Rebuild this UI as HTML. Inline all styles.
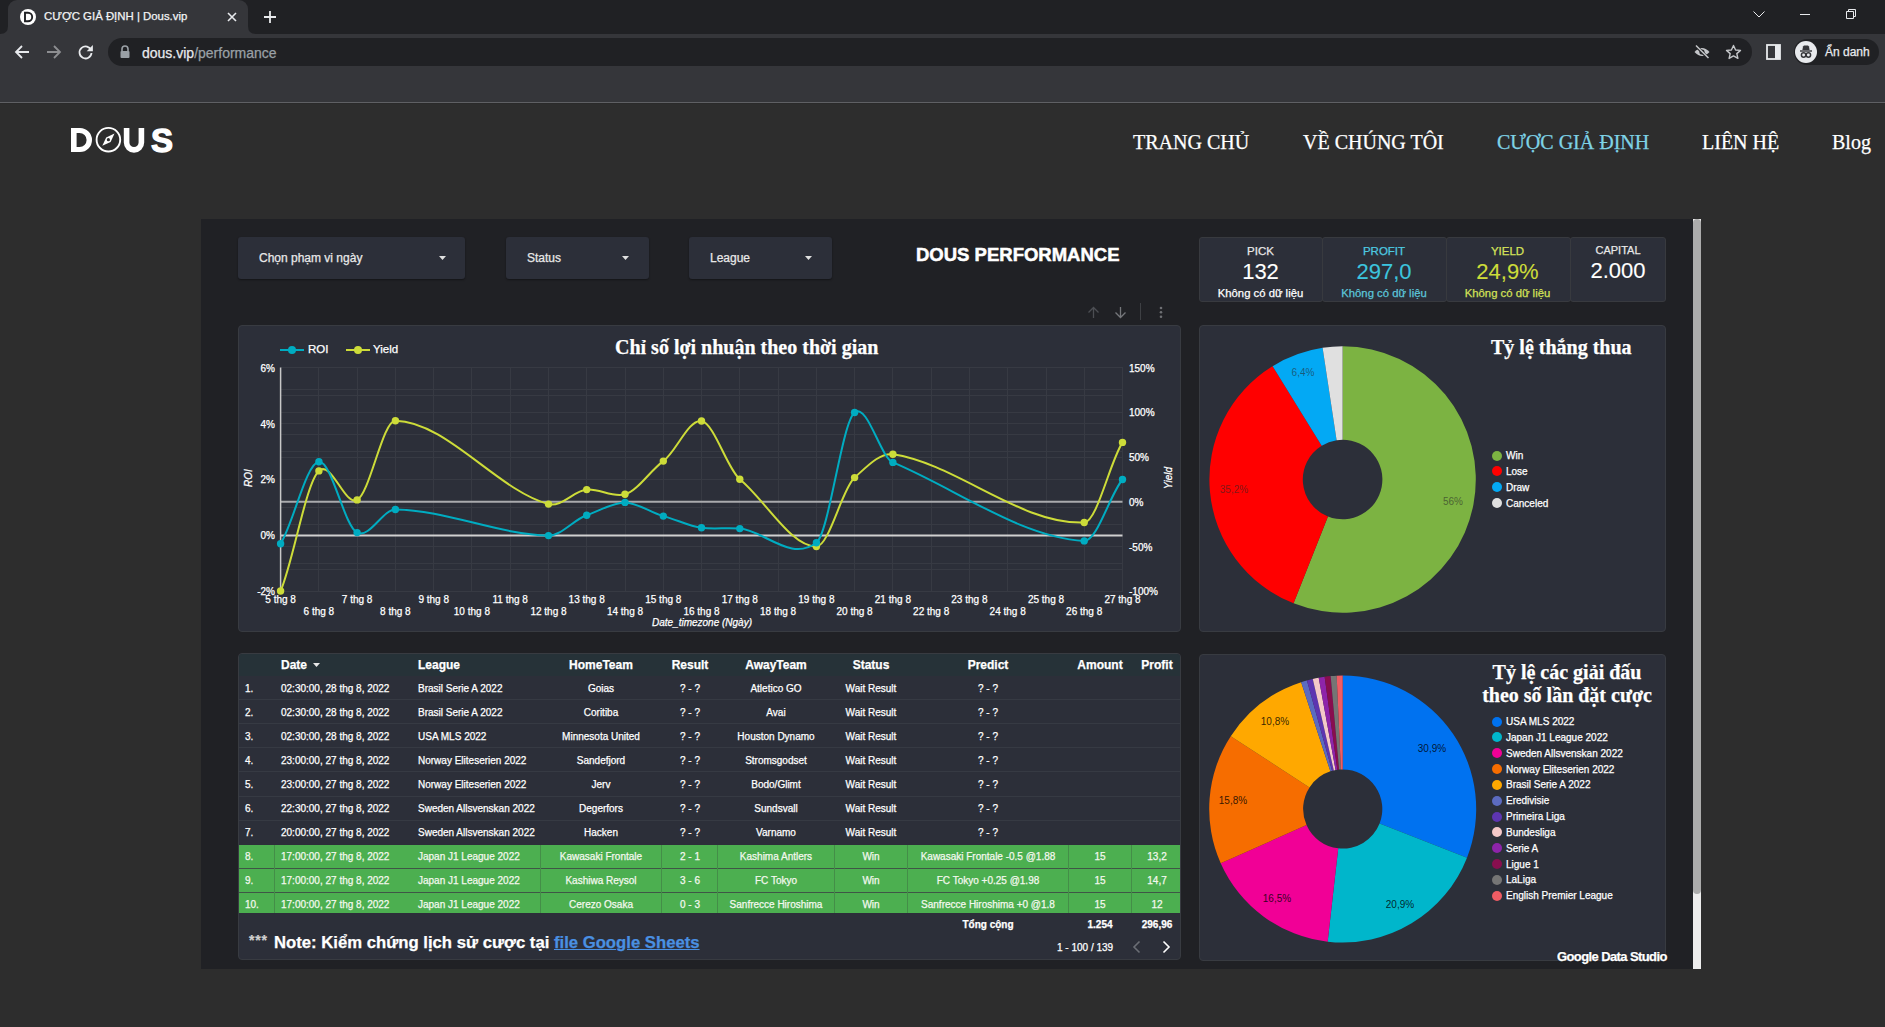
<!DOCTYPE html>
<html><head><meta charset="utf-8">
<style>
*{margin:0;padding:0;box-sizing:border-box}
html,body{width:1885px;height:1027px;overflow:hidden;background:#2d2d2d;font-family:"Liberation Sans",sans-serif;color:#fff}
.a{position:absolute}
.t{position:absolute;white-space:nowrap;line-height:1;-webkit-text-stroke:0.25px currentColor}
svg{position:absolute;overflow:visible}
.dd{position:absolute;background:#2c2f39;border-radius:3px;box-shadow:0 1px 2px rgba(0,0,0,.4)}
.card{position:absolute;background:#2c2f39;border:1px solid #383b41;border-radius:4px}
.kpi{position:absolute;background:#2c2f39;border:1px solid #383a3f;border-radius:3px}
.serif{font-family:"Liberation Serif",serif}
</style></head><body>
<!-- browser chrome -->
<div class="a" style="left:0;top:0;width:1885px;height:34px;background:#202124"></div>
<div class="a" style="left:8px;top:0;width:240px;height:34px;background:#35363a;border-radius:9px 9px 0 0"></div>
<svg style="left:0;top:24px" width="8" height="10"><path d="M0 10 Q8 10 8 2 L8 10 Z" fill="#35363a"/></svg>
<svg style="left:248px;top:24px" width="8" height="10"><path d="M0 2 Q0 10 8 10 L0 10 Z" fill="#35363a"/></svg>
<div class="a" style="left:0;top:34px;width:1885px;height:68px;background:#35363a"></div>
<div class="a" style="left:0;top:102px;width:1885px;height:1px;background:#5f6064"></div>
<div class="a" style="left:0;top:103px;width:1885px;height:1px;background:#2a2a2a"></div>
<!-- favicon -->
<div class="a" style="left:20px;top:9px;width:16px;height:16px;border-radius:50%;background:#fff"></div>
<svg style="left:20px;top:9px" width="16" height="16"><path d="M5 3.8 H8 A4.2 4.2 0 0 1 8 12.2 H5 Z" fill="none" stroke="#202124" stroke-width="1.9"/></svg>
<div class="t" style="left:44px;top:10px;font:11.4px 'Liberation Sans';color:#f1f3f4">CƯỢC GIẢ ĐỊNH | Dous.vip</div>
<svg style="left:226px;top:11px" width="12" height="12"><path d="M2 2 L10 10 M10 2 L2 10" stroke="#e8eaed" stroke-width="1.6"/></svg>
<svg style="left:263px;top:10px" width="14" height="14"><path d="M7 1 V13 M1 7 H13" stroke="#e8eaed" stroke-width="1.8"/></svg>
<!-- window controls -->
<svg style="left:1752px;top:9px" width="14" height="10"><path d="M1.5 2.5 L7 8 L12.5 2.5" stroke="#e8eaed" stroke-width="1" fill="none"/></svg>
<div class="a" style="left:1800px;top:14px;width:10px;height:1px;background:#e8eaed"></div>
<svg style="left:1845px;top:8px" width="12" height="12"><path d="M1.5 3.5 H8.5 V10.5 H1.5 Z M3.5 3.5 V1.5 H10.5 V8.5 H8.5" stroke="#e8eaed" stroke-width="1" fill="none"/></svg>
<!-- nav buttons -->
<svg style="left:14px;top:44px" width="16" height="16"><path d="M15 8 H2.5 M8 2 L2 8 L8 14" stroke="#e8eaed" stroke-width="1.8" fill="none"/></svg>
<svg style="left:46px;top:44px" width="16" height="16"><path d="M1 8 H13.5 M8 2 L14 8 L8 14" stroke="#8d8e91" stroke-width="1.8" fill="none"/></svg>
<svg style="left:78px;top:44px" width="16" height="16"><path d="M13.2 6.5 A6 6 0 1 0 13.5 9" stroke="#e8eaed" stroke-width="1.8" fill="none"/><path d="M14.9 1 L14.9 7.2 L8.7 7.2 Z" fill="#e8eaed"/></svg>
<!-- omnibox -->
<div class="a" style="left:108px;top:38px;width:1644px;height:28px;background:#202124;border-radius:14px"></div>
<svg style="left:119px;top:45px" width="12" height="14"><path d="M3 6 V4 A3 3 0 0 1 9 4 V6" stroke="#9aa0a6" stroke-width="1.6" fill="none"/><rect x="1.5" y="6" width="9" height="7" rx="1" fill="#9aa0a6"/></svg>
<div class="t" style="left:142px;top:45px;font:14px 'Liberation Sans';color:#e8eaed">dous.vip<span style="color:#9aa0a6">/performance</span></div>
<!-- eye slash -->
<svg style="left:1693px;top:44px" width="18" height="16"><path d="M1.5 8 Q9 0 16.5 8 Q9 16 1.5 8 Z" fill="#c4c6c9"/><circle cx="9" cy="8" r="2.6" fill="#202124"/><path d="M3 2 L15 14" stroke="#202124" stroke-width="3"/><path d="M3 1.5 L15.5 14" stroke="#c4c6c9" stroke-width="1.5"/></svg>
<!-- star -->
<svg style="left:1725px;top:44px" width="17" height="16"><path d="M8.5 1.5 L10.6 6 L15.5 6.4 L11.8 9.6 L12.9 14.4 L8.5 11.9 L4.1 14.4 L5.2 9.6 L1.5 6.4 L6.4 6 Z" stroke="#c4c6c9" stroke-width="1.4" fill="none" stroke-linejoin="round"/></svg>
<!-- side panel -->
<svg style="left:1766px;top:44px" width="16" height="16"><rect x="1" y="1" width="13" height="14" fill="none" stroke="#e8eaed" stroke-width="1.8"/><rect x="9" y="1" width="5" height="14" fill="#e8eaed"/></svg>
<!-- incognito pill -->
<div class="a" style="left:1794px;top:39px;width:85px;height:26px;background:#202124;border-radius:13px"></div>
<div class="a" style="left:1795px;top:41px;width:22px;height:22px;border-radius:50%;background:#e8eaed"></div>
<svg style="left:1795px;top:41px" width="22" height="22"><path d="M8 5.5 L9 4.5 H13 L14 5.5 L14.6 9 H7.4 Z" fill="#35363a"/><rect x="5" y="9.3" width="12" height="1.4" fill="#35363a"/><circle cx="8.6" cy="14" r="2.2" fill="none" stroke="#35363a" stroke-width="1.5"/><circle cx="13.4" cy="14" r="2.2" fill="none" stroke="#35363a" stroke-width="1.5"/><path d="M10.8 14 H11.2" stroke="#35363a" stroke-width="1.5"/></svg>
<div class="t" style="left:1825px;top:45px;font:12px 'Liberation Sans';color:#e8eaed">Ẩn danh</div>
<!-- site header -->
<svg style="left:70px;top:126px" width="105" height="30" viewBox="0 0 105 30">
 <path d="M1 2 H10 A12 12 0 0 1 10 26 H1 Z M6.6 7 V21 H9.6 A7 7 0 0 0 9.6 7 Z" fill="#fff" fill-rule="evenodd"/>
 <circle cx="38.4" cy="13.7" r="11.8" fill="none" stroke="#fff" stroke-width="1.9"/>
 <path d="M44.5 7.6 L40.6 15.9 L32.3 19.8 L36.2 11.5 Z" fill="#fff"/>
 <circle cx="38.4" cy="13.7" r="1.6" fill="#2d2d2d"/>
 <path d="M53.8 2 H59.4 V16.5 A4.6 4.6 0 0 0 68.6 16.5 V2 H74.2 V16.5 A10.2 10.2 0 0 1 53.8 16.5 Z" fill="#fff"/>
 <text x="81" y="25.8" font-family="Liberation Sans" font-weight="bold" font-size="33" fill="#fff" stroke="#fff" stroke-width="1.3">S</text>
</svg>
<div class="t serif" style="left:1133px;top:132px;font-size:20px;color:#fff">TRANG CHỦ</div>
<div class="t serif" style="left:1303px;top:132px;font-size:20px;color:#fff">VỀ CHÚNG TÔI</div>
<div class="t serif" style="left:1497px;top:132px;font-size:20px;color:#7fd3e6">CƯỢC GIẢ ĐỊNH</div>
<div class="t serif" style="left:1702px;top:132px;font-size:20px;color:#fff">LIÊN HỆ</div>
<div class="t serif" style="left:1832px;top:132px;font-size:20px;color:#fff">Blog</div>

<!-- dashboard panel -->
<div class="a" style="left:201px;top:219px;width:1492px;height:750px;background:#202125"></div>
<!-- scrollbar -->
<div class="a" style="left:1693px;top:219px;width:8px;height:750px;background:#ededed"></div>
<div class="a" style="left:1693px;top:219px;width:8px;height:675px;background:#acacac;border-radius:4px"></div>

<!-- dropdowns -->
<div class="dd" style="left:238px;top:237px;width:227px;height:42px"></div>
<div class="t" style="left:259px;top:252px;font-size:12px;color:#e8e8e8">Chọn phạm vi ngày</div>
<svg style="left:439px;top:256px" width="7" height="4"><path d="M0 0 H7 L3.5 4 Z" fill="#e0e0e0"/></svg>
<div class="dd" style="left:506px;top:237px;width:143px;height:42px"></div>
<div class="t" style="left:527px;top:252px;font-size:12px;color:#e8e8e8">Status</div>
<svg style="left:622px;top:256px" width="7" height="4"><path d="M0 0 H7 L3.5 4 Z" fill="#e0e0e0"/></svg>
<div class="dd" style="left:689px;top:237px;width:143px;height:42px"></div>
<div class="t" style="left:710px;top:252px;font-size:12px;color:#e8e8e8">League</div>
<svg style="left:805px;top:256px" width="7" height="4"><path d="M0 0 H7 L3.5 4 Z" fill="#e0e0e0"/></svg>

<div class="t" style="left:916px;top:246px;font-weight:bold;font-size:18.5px;color:#fff;-webkit-text-stroke:0.5px #fff">DOUS PERFORMANCE</div>

<!-- KPI cards -->
<div class="kpi" style="left:1199px;top:237px;width:124px;height:65px"></div>
<div class="kpi" style="left:1322px;top:237px;width:125px;height:65px"></div>
<div class="kpi" style="left:1446px;top:237px;width:125px;height:65px"></div>
<div class="kpi" style="left:1570px;top:237px;width:96px;height:65px"></div>
<div class="t" style="left:1199px;width:123px;text-align:center;top:246px;font-size:11.5px;color:#e8e8e8">PICK</div>
<div class="t" style="left:1199px;width:123px;text-align:center;top:261px;font-size:22px;-webkit-text-stroke:0.1px currentColor;color:#fff">132</div>
<div class="t" style="left:1199px;width:123px;text-align:center;top:288px;font-size:11.3px;color:#fff">Không có dữ liệu</div>
<div class="t" style="left:1323px;width:122px;text-align:center;top:246px;font-size:11.5px;color:#4dc9e0">PROFIT</div>
<div class="t" style="left:1323px;width:122px;text-align:center;top:261px;font-size:22px;-webkit-text-stroke:0.1px currentColor;color:#3cc4de">297,0</div>
<div class="t" style="left:1323px;width:122px;text-align:center;top:288px;font-size:11.3px;color:#5cc6da">Không có dữ liệu</div>
<div class="t" style="left:1446px;width:123px;text-align:center;top:246px;font-size:11.5px;color:#d6e35a">YIELD</div>
<div class="t" style="left:1446px;width:123px;text-align:center;top:261px;font-size:22px;-webkit-text-stroke:0.1px currentColor;color:#cddc39">24,9%</div>
<div class="t" style="left:1446px;width:123px;text-align:center;top:288px;font-size:11.3px;color:#d4e157">Không có dữ liệu</div>
<div class="t" style="left:1570px;width:96px;text-align:center;top:245px;font-size:11px;color:#e8e8e8">CAPITAL</div>
<div class="t" style="left:1570px;width:96px;text-align:center;top:260px;font-size:22px;-webkit-text-stroke:0.1px currentColor;color:#fff">2.000</div>

<!-- chart toolbar -->
<svg style="left:1087px;top:306px" width="90" height="16">
 <path d="M6.5 12 V1.5 M1.5 6.5 L6.5 1.5 L11.5 6.5" stroke="#4c4e53" stroke-width="1.3" fill="none"/>
 <path d="M33.5 1 V11.5 M28.5 6.5 L33.5 11.5 L38.5 6.5" stroke="#75777b" stroke-width="1.3" fill="none"/>
 <path d="M53.5 -3 V14" stroke="#3e4044" stroke-width="1"/>
 <circle cx="74" cy="2" r="1.3" fill="#6e7074"/><circle cx="74" cy="6.3" r="1.3" fill="#6e7074"/><circle cx="74" cy="10.7" r="1.3" fill="#6e7074"/>
</svg>
<!-- line chart card -->
<div class="card" style="left:238px;top:325px;width:943px;height:307px"></div>
<svg style="left:0;top:0" width="1885" height="1027">
<path d="M280.6 367.5 V591.4 M318.9 367.5 V591.4 M357.1 367.5 V591.4 M395.4 367.5 V591.4 M433.7 367.5 V591.4 M471.9 367.5 V591.4 M510.2 367.5 V591.4 M548.5 367.5 V591.4 M586.7 367.5 V591.4 M625.0 367.5 V591.4 M663.3 367.5 V591.4 M701.5 367.5 V591.4 M739.8 367.5 V591.4 M778.1 367.5 V591.4 M816.4 367.5 V591.4 M854.6 367.5 V591.4 M892.9 367.5 V591.4 M931.2 367.5 V591.4 M969.4 367.5 V591.4 M1007.7 367.5 V591.4 M1046.0 367.5 V591.4 M1084.2 367.5 V591.4 M1122.5 367.5 V591.4 M280.6 367.5 H1122.5 M280.6 395.5 H1122.5 M280.6 423.5 H1122.5 M280.6 451.5 H1122.5 M280.6 479.4 H1122.5 M280.6 507.4 H1122.5 M280.6 535.4 H1122.5 M280.6 563.4 H1122.5 M280.6 591.4 H1122.5 M280.6 367.5 H1122.5 M280.6 389.9 H1122.5 M280.6 412.3 H1122.5 M280.6 434.7 H1122.5 M280.6 457.1 H1122.5 M280.6 479.4 H1122.5 M280.6 501.8 H1122.5 M280.6 524.2 H1122.5 M280.6 546.6 H1122.5 M280.6 569.0 H1122.5 M280.6 591.4 H1122.5" stroke="#373a43" stroke-width="1" fill="none" shape-rendering="crispEdges"/>
<path d="M280.6 501.8 H1122.5" stroke="#a9aaad" stroke-width="2"/>
<path d="M280.6 535.4 H1122.5" stroke="#d0d0d0" stroke-width="2"/>
<path d="M280.6 367.5 V591.4" stroke="#c8c8c8" stroke-width="1.5"/>
<path d="M280.6 591.0 C293.4 561.0 306.1 482.3 318.9 470.9 C331.6 459.5 344.4 506.2 357.1 499.9 C369.9 493.6 382.6 420.5 395.4 420.7 C446.4 421.5 497.5 490.3 548.5 504.1 C561.2 507.5 574.0 490.8 586.7 489.6 C599.5 488.4 612.3 497.9 625.0 494.3 C637.8 490.7 650.5 470.3 663.3 461.1 C676.0 451.9 688.8 418.7 701.5 421.0 C714.3 423.3 727.1 468.7 739.8 479.2 C765.3 500.1 790.8 546.8 816.4 546.5 C829.1 546.4 841.9 489.1 854.6 477.6 C867.4 466.1 880.1 452.4 892.9 454.3 C956.7 463.7 1020.5 525.0 1084.2 522.5 C1097.0 522.0 1109.7 462.4 1122.5 442.4" stroke="#cddc39" stroke-width="2" fill="none"/>
<circle cx="280.6" cy="591.0" r="3.7" fill="#cddc39"/>
<circle cx="318.9" cy="470.9" r="3.7" fill="#cddc39"/>
<circle cx="357.1" cy="499.9" r="3.7" fill="#cddc39"/>
<circle cx="395.4" cy="420.7" r="3.7" fill="#cddc39"/>
<circle cx="548.5" cy="504.1" r="3.7" fill="#cddc39"/>
<circle cx="586.7" cy="489.6" r="3.7" fill="#cddc39"/>
<circle cx="625.0" cy="494.3" r="3.7" fill="#cddc39"/>
<circle cx="663.3" cy="461.1" r="3.7" fill="#cddc39"/>
<circle cx="701.5" cy="421.0" r="3.7" fill="#cddc39"/>
<circle cx="739.8" cy="479.2" r="3.7" fill="#cddc39"/>
<circle cx="816.4" cy="546.5" r="3.7" fill="#cddc39"/>
<circle cx="854.6" cy="477.6" r="3.7" fill="#cddc39"/>
<circle cx="892.9" cy="454.3" r="3.7" fill="#cddc39"/>
<circle cx="1084.2" cy="522.5" r="3.7" fill="#cddc39"/>
<circle cx="1122.5" cy="442.4" r="3.7" fill="#cddc39"/>
<path d="M280.6 543.8 C293.4 523.3 306.1 463.2 318.9 461.8 C331.6 460.4 344.4 526.6 357.1 532.6 C369.9 538.6 382.6 509.4 395.4 509.5 C446.4 510.1 497.5 534.4 548.5 535.6 C561.2 535.9 574.0 519.4 586.7 515.3 C599.5 511.1 612.3 502.3 625.0 502.4 C637.8 502.5 650.5 512.9 663.3 516.1 C676.0 519.3 688.8 526.2 701.5 527.8 C714.3 529.4 727.1 527.4 739.8 528.6 C765.3 531.1 790.8 562.1 816.4 542.7 C829.1 533.0 841.9 422.5 854.6 412.5 C867.4 402.5 880.1 457.0 892.9 462.4 C956.7 489.1 1020.5 537.3 1084.2 540.9 C1097.0 541.6 1109.7 494.9 1122.5 479.5" stroke="#00acc1" stroke-width="2" fill="none"/>
<circle cx="280.6" cy="543.8" r="3.7" fill="#00acc1"/>
<circle cx="318.9" cy="461.8" r="3.7" fill="#00acc1"/>
<circle cx="357.1" cy="532.6" r="3.7" fill="#00acc1"/>
<circle cx="395.4" cy="509.5" r="3.7" fill="#00acc1"/>
<circle cx="548.5" cy="535.6" r="3.7" fill="#00acc1"/>
<circle cx="586.7" cy="515.3" r="3.7" fill="#00acc1"/>
<circle cx="625.0" cy="502.4" r="3.7" fill="#00acc1"/>
<circle cx="663.3" cy="516.1" r="3.7" fill="#00acc1"/>
<circle cx="701.5" cy="527.8" r="3.7" fill="#00acc1"/>
<circle cx="739.8" cy="528.6" r="3.7" fill="#00acc1"/>
<circle cx="816.4" cy="542.7" r="3.7" fill="#00acc1"/>
<circle cx="854.6" cy="412.5" r="3.7" fill="#00acc1"/>
<circle cx="892.9" cy="462.4" r="3.7" fill="#00acc1"/>
<circle cx="1084.2" cy="540.9" r="3.7" fill="#00acc1"/>
<circle cx="1122.5" cy="479.5" r="3.7" fill="#00acc1"/>
</svg>
<svg style="left:0;top:0" width="1885" height="1027">
<path d="M280 350 H304" stroke="#00acc1" stroke-width="2"/><circle cx="292" cy="350" r="4" fill="#00acc1"/>
<path d="M346 350 H370" stroke="#cddc39" stroke-width="2"/><circle cx="358" cy="350" r="4" fill="#cddc39"/>
</svg>
<div class="t" style="left:308px;top:344px;font-size:11.5px;color:#fff">ROI</div>
<div class="t" style="left:373px;top:344px;font-size:11.5px;color:#fff">Yield</div>
<div class="t serif" style="left:615px;top:337px;font-size:20px;font-weight:bold;color:#fff">Chỉ số lợi nhuận theo thời gian</div>
<div class="t" style="left:175px;width:100px;text-align:right;top:363.5px;font-size:10px;color:#fff">6%</div>
<div class="t" style="left:175px;width:100px;text-align:right;top:419.5px;font-size:10px;color:#fff">4%</div>
<div class="t" style="left:175px;width:100px;text-align:right;top:475.4px;font-size:10px;color:#fff">2%</div>
<div class="t" style="left:175px;width:100px;text-align:right;top:531.4px;font-size:10px;color:#fff">0%</div>
<div class="t" style="left:175px;width:100px;text-align:right;top:587.4px;font-size:10px;color:#fff">-2%</div>
<div class="t" style="left:1129px;top:363.5px;font-size:10px;color:#fff">150%</div>
<div class="t" style="left:1129px;top:408.3px;font-size:10px;color:#fff">100%</div>
<div class="t" style="left:1129px;top:453.1px;font-size:10px;color:#fff">50%</div>
<div class="t" style="left:1129px;top:497.8px;font-size:10px;color:#fff">0%</div>
<div class="t" style="left:1129px;top:542.6px;font-size:10px;color:#fff">-50%</div>
<div class="t" style="left:1129px;top:587.4px;font-size:10px;color:#fff">-100%</div>
<div class="t" style="left:240.6px;width:80px;text-align:center;top:595px;font-size:10px;color:#fff">5 thg 8</div>
<div class="t" style="left:278.9px;width:80px;text-align:center;top:607px;font-size:10px;color:#fff">6 thg 8</div>
<div class="t" style="left:317.1px;width:80px;text-align:center;top:595px;font-size:10px;color:#fff">7 thg 8</div>
<div class="t" style="left:355.4px;width:80px;text-align:center;top:607px;font-size:10px;color:#fff">8 thg 8</div>
<div class="t" style="left:393.7px;width:80px;text-align:center;top:595px;font-size:10px;color:#fff">9 thg 8</div>
<div class="t" style="left:431.9px;width:80px;text-align:center;top:607px;font-size:10px;color:#fff">10 thg 8</div>
<div class="t" style="left:470.2px;width:80px;text-align:center;top:595px;font-size:10px;color:#fff">11 thg 8</div>
<div class="t" style="left:508.5px;width:80px;text-align:center;top:607px;font-size:10px;color:#fff">12 thg 8</div>
<div class="t" style="left:546.7px;width:80px;text-align:center;top:595px;font-size:10px;color:#fff">13 thg 8</div>
<div class="t" style="left:585.0px;width:80px;text-align:center;top:607px;font-size:10px;color:#fff">14 thg 8</div>
<div class="t" style="left:623.3px;width:80px;text-align:center;top:595px;font-size:10px;color:#fff">15 thg 8</div>
<div class="t" style="left:661.5px;width:80px;text-align:center;top:607px;font-size:10px;color:#fff">16 thg 8</div>
<div class="t" style="left:699.8px;width:80px;text-align:center;top:595px;font-size:10px;color:#fff">17 thg 8</div>
<div class="t" style="left:738.1px;width:80px;text-align:center;top:607px;font-size:10px;color:#fff">18 thg 8</div>
<div class="t" style="left:776.4px;width:80px;text-align:center;top:595px;font-size:10px;color:#fff">19 thg 8</div>
<div class="t" style="left:814.6px;width:80px;text-align:center;top:607px;font-size:10px;color:#fff">20 thg 8</div>
<div class="t" style="left:852.9px;width:80px;text-align:center;top:595px;font-size:10px;color:#fff">21 thg 8</div>
<div class="t" style="left:891.2px;width:80px;text-align:center;top:607px;font-size:10px;color:#fff">22 thg 8</div>
<div class="t" style="left:929.4px;width:80px;text-align:center;top:595px;font-size:10px;color:#fff">23 thg 8</div>
<div class="t" style="left:967.7px;width:80px;text-align:center;top:607px;font-size:10px;color:#fff">24 thg 8</div>
<div class="t" style="left:1006.0px;width:80px;text-align:center;top:595px;font-size:10px;color:#fff">25 thg 8</div>
<div class="t" style="left:1044.2px;width:80px;text-align:center;top:607px;font-size:10px;color:#fff">26 thg 8</div>
<div class="t" style="left:1082.5px;width:80px;text-align:center;top:595px;font-size:10px;color:#fff">27 thg 8</div>
<div class="t" style="left:602px;width:200px;text-align:center;top:618px;font-size:10px;font-style:italic;color:#fff">Date_timezone (Ngày)</div>
<div class="t" style="left:229px;width:40px;text-align:center;top:473px;font-size:10px;font-style:italic;color:#fff;transform:rotate(-90deg)">ROI</div>
<div class="t" style="left:1149px;width:40px;text-align:center;top:473px;font-size:10px;font-style:italic;color:#fff;transform:rotate(-90deg)">Yield</div>
<!-- pie 1 -->
<div class="card" style="left:1199px;top:325px;width:467px;height:307px"></div>
<svg style="left:0;top:0" width="1885" height="1027">
<path d="M1342.60 346.30 A133.2 133.2 0 1 1 1293.57 603.35 L1327.95 516.51 A39.8 39.8 0 1 0 1342.60 439.70 Z" fill="#7cb342"/>
<path d="M1293.57 603.35 A133.2 133.2 0 0 1 1272.65 366.15 L1321.70 445.63 A39.8 39.8 0 0 0 1327.95 516.51 Z" fill="#ff0000"/>
<path d="M1272.65 366.15 A133.2 133.2 0 0 1 1322.59 347.81 L1336.62 440.15 A39.8 39.8 0 0 0 1321.70 445.63 Z" fill="#03a9f4"/>
<path d="M1322.59 347.81 A133.2 133.2 0 0 1 1342.60 346.30 L1342.60 439.70 A39.8 39.8 0 0 0 1336.62 440.15 Z" fill="#e0e0e0"/>
</svg>
<div class="t serif" style="left:1491px;top:337px;font-size:20px;font-weight:bold;color:#fff">Tỷ lệ thắng thua</div>
<div class="a" style="left:1492px;top:450.5px;width:10px;height:10px;border-radius:50%;background:#7cb342"></div>
<div class="t" style="left:1506px;top:451.0px;font-size:10px;color:#fff">Win</div>
<div class="a" style="left:1492px;top:466.4px;width:10px;height:10px;border-radius:50%;background:#ff0000"></div>
<div class="t" style="left:1506px;top:466.9px;font-size:10px;color:#fff">Lose</div>
<div class="a" style="left:1492px;top:482.3px;width:10px;height:10px;border-radius:50%;background:#03a9f4"></div>
<div class="t" style="left:1506px;top:482.8px;font-size:10px;color:#fff">Draw</div>
<div class="a" style="left:1492px;top:498.2px;width:10px;height:10px;border-radius:50%;background:#e0e0e0"></div>
<div class="t" style="left:1506px;top:498.7px;font-size:10px;color:#fff">Canceled</div>
<div class="t" style="left:1423px;width:60px;text-align:center;top:497px;font-size:10px;color:rgba(40,40,40,.6);-webkit-text-stroke:0">56%</div>
<div class="t" style="left:1204px;width:60px;text-align:center;top:485px;font-size:10px;color:rgba(40,40,40,.6);-webkit-text-stroke:0">35,2%</div>
<div class="t" style="left:1273px;width:60px;text-align:center;top:368px;font-size:10px;color:rgba(40,40,40,.6);-webkit-text-stroke:0">6,4%</div>
<!-- pie 2 -->
<div class="card" style="left:1199px;top:654px;width:467px;height:307px"></div>
<svg style="left:0;top:0" width="1885" height="1027">
<path d="M1342.70 675.50 A133.5 133.5 0 0 1 1467.02 857.64 L1379.58 823.43 A39.6 39.6 0 0 0 1342.70 769.40 Z" fill="#0072f0"/>
<path d="M1467.02 857.64 A133.5 133.5 0 0 1 1327.65 941.65 L1338.23 848.35 A39.6 39.6 0 0 0 1379.58 823.43 Z" fill="#00b6cb"/>
<path d="M1327.65 941.65 A133.5 133.5 0 0 1 1220.70 863.21 L1306.51 825.08 A39.6 39.6 0 0 0 1338.23 848.35 Z" fill="#f10096"/>
<path d="M1220.70 863.21 A133.5 133.5 0 0 1 1230.76 736.25 L1309.50 787.42 A39.6 39.6 0 0 0 1306.51 825.08 Z" fill="#f66d00"/>
<path d="M1230.76 736.25 A133.5 133.5 0 0 1 1301.16 682.13 L1330.38 771.37 A39.6 39.6 0 0 0 1309.50 787.42 Z" fill="#ffa800"/>
<path d="M1301.16 682.13 A133.5 133.5 0 0 1 1306.93 680.38 L1332.09 770.85 A39.6 39.6 0 0 0 1330.38 771.37 Z" fill="#5c6bc0"/>
<path d="M1306.93 680.38 A133.5 133.5 0 0 1 1312.78 678.90 L1333.83 770.41 A39.6 39.6 0 0 0 1332.09 770.85 Z" fill="#5e35b1"/>
<path d="M1312.78 678.90 A133.5 133.5 0 0 1 1318.69 677.68 L1335.58 770.05 A39.6 39.6 0 0 0 1333.83 770.41 Z" fill="#f5c9c9"/>
<path d="M1318.69 677.68 A133.5 133.5 0 0 1 1324.65 676.73 L1337.35 769.76 A39.6 39.6 0 0 0 1335.58 770.05 Z" fill="#8e24aa"/>
<path d="M1324.65 676.73 A133.5 133.5 0 0 1 1330.65 676.05 L1339.12 769.56 A39.6 39.6 0 0 0 1337.35 769.76 Z" fill="#880e4f"/>
<path d="M1330.65 676.05 A133.5 133.5 0 0 1 1336.67 675.64 L1340.91 769.44 A39.6 39.6 0 0 0 1339.12 769.56 Z" fill="#757575"/>
<path d="M1336.67 675.64 A133.5 133.5 0 0 1 1342.70 675.50 L1342.70 769.40 A39.6 39.6 0 0 0 1340.91 769.44 Z" fill="#ef5c64"/>
</svg>
<div class="t serif" style="left:1467px;width:200px;text-align:center;top:662px;font-size:20px;font-weight:bold;color:#fff">Tỷ lệ các giải đấu</div>
<div class="t serif" style="left:1467px;width:200px;text-align:center;top:685px;font-size:20px;font-weight:bold;color:#fff">theo số lần đặt cược</div>
<div class="a" style="left:1492px;top:716.5px;width:10px;height:10px;border-radius:50%;background:#0072f0"></div>
<div class="t" style="left:1506px;top:717.0px;font-size:10px;color:#fff">USA MLS 2022</div>
<div class="a" style="left:1492px;top:732.3px;width:10px;height:10px;border-radius:50%;background:#00b6cb"></div>
<div class="t" style="left:1506px;top:732.8px;font-size:10px;color:#fff">Japan J1 League 2022</div>
<div class="a" style="left:1492px;top:748.2px;width:10px;height:10px;border-radius:50%;background:#f10096"></div>
<div class="t" style="left:1506px;top:748.7px;font-size:10px;color:#fff">Sweden Allsvenskan 2022</div>
<div class="a" style="left:1492px;top:764.0px;width:10px;height:10px;border-radius:50%;background:#f66d00"></div>
<div class="t" style="left:1506px;top:764.5px;font-size:10px;color:#fff">Norway Eliteserien 2022</div>
<div class="a" style="left:1492px;top:779.9px;width:10px;height:10px;border-radius:50%;background:#ffa800"></div>
<div class="t" style="left:1506px;top:780.4px;font-size:10px;color:#fff">Brasil Serie A 2022</div>
<div class="a" style="left:1492px;top:795.7px;width:10px;height:10px;border-radius:50%;background:#5c6bc0"></div>
<div class="t" style="left:1506px;top:796.2px;font-size:10px;color:#fff">Eredivisie</div>
<div class="a" style="left:1492px;top:811.5px;width:10px;height:10px;border-radius:50%;background:#5e35b1"></div>
<div class="t" style="left:1506px;top:812.0px;font-size:10px;color:#fff">Primeira Liga</div>
<div class="a" style="left:1492px;top:827.4px;width:10px;height:10px;border-radius:50%;background:#f5c9c9"></div>
<div class="t" style="left:1506px;top:827.9px;font-size:10px;color:#fff">Bundesliga</div>
<div class="a" style="left:1492px;top:843.2px;width:10px;height:10px;border-radius:50%;background:#8e24aa"></div>
<div class="t" style="left:1506px;top:843.7px;font-size:10px;color:#fff">Serie A</div>
<div class="a" style="left:1492px;top:859.1px;width:10px;height:10px;border-radius:50%;background:#880e4f"></div>
<div class="t" style="left:1506px;top:859.6px;font-size:10px;color:#fff">Ligue 1</div>
<div class="a" style="left:1492px;top:874.9px;width:10px;height:10px;border-radius:50%;background:#757575"></div>
<div class="t" style="left:1506px;top:875.4px;font-size:10px;color:#fff">LaLiga</div>
<div class="a" style="left:1492px;top:890.7px;width:10px;height:10px;border-radius:50%;background:#ef5c64"></div>
<div class="t" style="left:1506px;top:891.2px;font-size:10px;color:#fff">English Premier League</div>
<div class="t" style="left:1402px;width:60px;text-align:center;top:744px;font-size:10px;color:rgba(0,0,0,.8);-webkit-text-stroke:0">30,9%</div>
<div class="t" style="left:1370px;width:60px;text-align:center;top:900px;font-size:10px;color:rgba(0,0,0,.8);-webkit-text-stroke:0">20,9%</div>
<div class="t" style="left:1247px;width:60px;text-align:center;top:894px;font-size:10px;color:rgba(0,0,0,.8);-webkit-text-stroke:0">16,5%</div>
<div class="t" style="left:1203px;width:60px;text-align:center;top:796px;font-size:10px;color:rgba(0,0,0,.8);-webkit-text-stroke:0">15,8%</div>
<div class="t" style="left:1245px;width:60px;text-align:center;top:717px;font-size:10px;color:rgba(0,0,0,.8);-webkit-text-stroke:0">10,8%</div>
<div class="t" style="left:1557px;top:950px;font-size:13px;font-weight:bold;color:#fff;letter-spacing:-0.6px;text-shadow:0 0 2px rgba(0,0,0,.6)">Google Data Studio</div>
<!-- table card -->
<div class="card" style="left:238px;top:653px;width:943px;height:307px"></div>
<div class="a" style="left:239px;top:654px;width:941px;height:22px;background:#263238;border-radius:3px 3px 0 0"></div>
<div class="t" style="left:281px;top:659px;font-size:12px;font-weight:bold;color:#fff">Date</div>
<div class="t" style="left:418px;top:659px;font-size:12px;font-weight:bold;color:#fff">League</div>
<div class="t" style="left:541px;width:120px;text-align:center;top:659px;font-size:12px;font-weight:bold;color:#fff">HomeTeam</div>
<div class="t" style="left:630px;width:120px;text-align:center;top:659px;font-size:12px;font-weight:bold;color:#fff">Result</div>
<div class="t" style="left:716px;width:120px;text-align:center;top:659px;font-size:12px;font-weight:bold;color:#fff">AwayTeam</div>
<div class="t" style="left:811px;width:120px;text-align:center;top:659px;font-size:12px;font-weight:bold;color:#fff">Status</div>
<div class="t" style="left:928px;width:120px;text-align:center;top:659px;font-size:12px;font-weight:bold;color:#fff">Predict</div>
<div class="t" style="left:1040px;width:120px;text-align:center;top:659px;font-size:12px;font-weight:bold;color:#fff">Amount</div>
<div class="t" style="left:1097px;width:120px;text-align:center;top:659px;font-size:12px;font-weight:bold;color:#fff">Profit</div>
<svg style="left:313px;top:663px" width="7" height="4"><path d="M0 0 H7 L3.5 4 Z" fill="#e8e8e8"/></svg>
<div class="a" style="left:239px;top:844.7px;width:941px;height:68.4px;background:#4caf50"></div>
<div class="a" style="left:239px;top:699.1px;width:941px;height:1px;background:#363a43"></div>
<div class="a" style="left:239px;top:723.2px;width:941px;height:1px;background:#363a43"></div>
<div class="a" style="left:239px;top:747.3px;width:941px;height:1px;background:#363a43"></div>
<div class="a" style="left:239px;top:771.4px;width:941px;height:1px;background:#363a43"></div>
<div class="a" style="left:239px;top:795.5px;width:941px;height:1px;background:#363a43"></div>
<div class="a" style="left:239px;top:819.6px;width:941px;height:1px;background:#363a43"></div>
<div class="a" style="left:239px;top:867.6px;width:941px;height:1.5px;background:#3f5646"></div>
<div class="a" style="left:239px;top:891.7px;width:941px;height:1.5px;background:#3f5646"></div>
<div class="a" style="left:274.0px;top:844.7px;width:1px;height:68.4px;background:#448e48"></div>
<div class="a" style="left:539.9px;top:844.7px;width:1px;height:68.4px;background:#448e48"></div>
<div class="a" style="left:660.8px;top:844.7px;width:1px;height:68.4px;background:#448e48"></div>
<div class="a" style="left:716.9px;top:844.7px;width:1px;height:68.4px;background:#448e48"></div>
<div class="a" style="left:834.0px;top:844.7px;width:1px;height:68.4px;background:#448e48"></div>
<div class="a" style="left:906.7px;top:844.7px;width:1px;height:68.4px;background:#448e48"></div>
<div class="a" style="left:1067.8px;top:844.7px;width:1px;height:68.4px;background:#448e48"></div>
<div class="a" style="left:1130.7px;top:844.7px;width:1px;height:68.4px;background:#448e48"></div>
<div class="t" style="left:245px;top:683.5px;font-size:10px;color:#fff">1.</div>
<div class="t" style="left:281px;top:683.5px;font-size:10px;color:#fff">02:30:00, 28 thg 8, 2022</div>
<div class="t" style="left:418px;top:683.5px;font-size:10px;color:#fff">Brasil Serie A 2022</div>
<div class="t" style="left:521px;width:160px;text-align:center;top:683.5px;font-size:10px;color:#fff">Goias</div>
<div class="t" style="left:610px;width:160px;text-align:center;top:683.5px;font-size:10px;color:#fff">? - ?</div>
<div class="t" style="left:696px;width:160px;text-align:center;top:683.5px;font-size:10px;color:#fff">Atletico GO</div>
<div class="t" style="left:791px;width:160px;text-align:center;top:683.5px;font-size:10px;color:#fff">Wait Result</div>
<div class="t" style="left:908px;width:160px;text-align:center;top:683.5px;font-size:10px;color:#fff">? - ?</div>
<div class="t" style="left:245px;top:707.6px;font-size:10px;color:#fff">2.</div>
<div class="t" style="left:281px;top:707.6px;font-size:10px;color:#fff">02:30:00, 28 thg 8, 2022</div>
<div class="t" style="left:418px;top:707.6px;font-size:10px;color:#fff">Brasil Serie A 2022</div>
<div class="t" style="left:521px;width:160px;text-align:center;top:707.6px;font-size:10px;color:#fff">Coritiba</div>
<div class="t" style="left:610px;width:160px;text-align:center;top:707.6px;font-size:10px;color:#fff">? - ?</div>
<div class="t" style="left:696px;width:160px;text-align:center;top:707.6px;font-size:10px;color:#fff">Avai</div>
<div class="t" style="left:791px;width:160px;text-align:center;top:707.6px;font-size:10px;color:#fff">Wait Result</div>
<div class="t" style="left:908px;width:160px;text-align:center;top:707.6px;font-size:10px;color:#fff">? - ?</div>
<div class="t" style="left:245px;top:731.8px;font-size:10px;color:#fff">3.</div>
<div class="t" style="left:281px;top:731.8px;font-size:10px;color:#fff">02:30:00, 28 thg 8, 2022</div>
<div class="t" style="left:418px;top:731.8px;font-size:10px;color:#fff">USA MLS 2022</div>
<div class="t" style="left:521px;width:160px;text-align:center;top:731.8px;font-size:10px;color:#fff">Minnesota United</div>
<div class="t" style="left:610px;width:160px;text-align:center;top:731.8px;font-size:10px;color:#fff">? - ?</div>
<div class="t" style="left:696px;width:160px;text-align:center;top:731.8px;font-size:10px;color:#fff">Houston Dynamo</div>
<div class="t" style="left:791px;width:160px;text-align:center;top:731.8px;font-size:10px;color:#fff">Wait Result</div>
<div class="t" style="left:908px;width:160px;text-align:center;top:731.8px;font-size:10px;color:#fff">? - ?</div>
<div class="t" style="left:245px;top:755.9px;font-size:10px;color:#fff">4.</div>
<div class="t" style="left:281px;top:755.9px;font-size:10px;color:#fff">23:00:00, 27 thg 8, 2022</div>
<div class="t" style="left:418px;top:755.9px;font-size:10px;color:#fff">Norway Eliteserien 2022</div>
<div class="t" style="left:521px;width:160px;text-align:center;top:755.9px;font-size:10px;color:#fff">Sandefjord</div>
<div class="t" style="left:610px;width:160px;text-align:center;top:755.9px;font-size:10px;color:#fff">? - ?</div>
<div class="t" style="left:696px;width:160px;text-align:center;top:755.9px;font-size:10px;color:#fff">Stromsgodset</div>
<div class="t" style="left:791px;width:160px;text-align:center;top:755.9px;font-size:10px;color:#fff">Wait Result</div>
<div class="t" style="left:908px;width:160px;text-align:center;top:755.9px;font-size:10px;color:#fff">? - ?</div>
<div class="t" style="left:245px;top:780.0px;font-size:10px;color:#fff">5.</div>
<div class="t" style="left:281px;top:780.0px;font-size:10px;color:#fff">23:00:00, 27 thg 8, 2022</div>
<div class="t" style="left:418px;top:780.0px;font-size:10px;color:#fff">Norway Eliteserien 2022</div>
<div class="t" style="left:521px;width:160px;text-align:center;top:780.0px;font-size:10px;color:#fff">Jerv</div>
<div class="t" style="left:610px;width:160px;text-align:center;top:780.0px;font-size:10px;color:#fff">? - ?</div>
<div class="t" style="left:696px;width:160px;text-align:center;top:780.0px;font-size:10px;color:#fff">Bodo/Glimt</div>
<div class="t" style="left:791px;width:160px;text-align:center;top:780.0px;font-size:10px;color:#fff">Wait Result</div>
<div class="t" style="left:908px;width:160px;text-align:center;top:780.0px;font-size:10px;color:#fff">? - ?</div>
<div class="t" style="left:245px;top:804.0px;font-size:10px;color:#fff">6.</div>
<div class="t" style="left:281px;top:804.0px;font-size:10px;color:#fff">22:30:00, 27 thg 8, 2022</div>
<div class="t" style="left:418px;top:804.0px;font-size:10px;color:#fff">Sweden Allsvenskan 2022</div>
<div class="t" style="left:521px;width:160px;text-align:center;top:804.0px;font-size:10px;color:#fff">Degerfors</div>
<div class="t" style="left:610px;width:160px;text-align:center;top:804.0px;font-size:10px;color:#fff">? - ?</div>
<div class="t" style="left:696px;width:160px;text-align:center;top:804.0px;font-size:10px;color:#fff">Sundsvall</div>
<div class="t" style="left:791px;width:160px;text-align:center;top:804.0px;font-size:10px;color:#fff">Wait Result</div>
<div class="t" style="left:908px;width:160px;text-align:center;top:804.0px;font-size:10px;color:#fff">? - ?</div>
<div class="t" style="left:245px;top:828.1px;font-size:10px;color:#fff">7.</div>
<div class="t" style="left:281px;top:828.1px;font-size:10px;color:#fff">20:00:00, 27 thg 8, 2022</div>
<div class="t" style="left:418px;top:828.1px;font-size:10px;color:#fff">Sweden Allsvenskan 2022</div>
<div class="t" style="left:521px;width:160px;text-align:center;top:828.1px;font-size:10px;color:#fff">Hacken</div>
<div class="t" style="left:610px;width:160px;text-align:center;top:828.1px;font-size:10px;color:#fff">? - ?</div>
<div class="t" style="left:696px;width:160px;text-align:center;top:828.1px;font-size:10px;color:#fff">Varnamo</div>
<div class="t" style="left:791px;width:160px;text-align:center;top:828.1px;font-size:10px;color:#fff">Wait Result</div>
<div class="t" style="left:908px;width:160px;text-align:center;top:828.1px;font-size:10px;color:#fff">? - ?</div>
<div class="t" style="left:245px;top:852.2px;font-size:10px;color:#f3f8ee">8.</div>
<div class="t" style="left:281px;top:852.2px;font-size:10px;color:#f3f8ee">17:00:00, 27 thg 8, 2022</div>
<div class="t" style="left:418px;top:852.2px;font-size:10px;color:#f3f8ee">Japan J1 League 2022</div>
<div class="t" style="left:521px;width:160px;text-align:center;top:852.2px;font-size:10px;color:#f3f8ee">Kawasaki Frontale</div>
<div class="t" style="left:610px;width:160px;text-align:center;top:852.2px;font-size:10px;color:#f3f8ee">2 - 1</div>
<div class="t" style="left:696px;width:160px;text-align:center;top:852.2px;font-size:10px;color:#f3f8ee">Kashima Antlers</div>
<div class="t" style="left:791px;width:160px;text-align:center;top:852.2px;font-size:10px;color:#f3f8ee">Win</div>
<div class="t" style="left:908px;width:160px;text-align:center;top:852.2px;font-size:10px;color:#f3f8ee">Kawasaki Frontale -0.5 @1.88</div>
<div class="t" style="left:1020px;width:160px;text-align:center;top:852.2px;font-size:10px;color:#f3f8ee">15</div>
<div class="t" style="left:1077px;width:160px;text-align:center;top:852.2px;font-size:10px;color:#f3f8ee">13,2</div>
<div class="t" style="left:245px;top:876.4px;font-size:10px;color:#f3f8ee">9.</div>
<div class="t" style="left:281px;top:876.4px;font-size:10px;color:#f3f8ee">17:00:00, 27 thg 8, 2022</div>
<div class="t" style="left:418px;top:876.4px;font-size:10px;color:#f3f8ee">Japan J1 League 2022</div>
<div class="t" style="left:521px;width:160px;text-align:center;top:876.4px;font-size:10px;color:#f3f8ee">Kashiwa Reysol</div>
<div class="t" style="left:610px;width:160px;text-align:center;top:876.4px;font-size:10px;color:#f3f8ee">3 - 6</div>
<div class="t" style="left:696px;width:160px;text-align:center;top:876.4px;font-size:10px;color:#f3f8ee">FC Tokyo</div>
<div class="t" style="left:791px;width:160px;text-align:center;top:876.4px;font-size:10px;color:#f3f8ee">Win</div>
<div class="t" style="left:908px;width:160px;text-align:center;top:876.4px;font-size:10px;color:#f3f8ee">FC Tokyo +0.25 @1.98</div>
<div class="t" style="left:1020px;width:160px;text-align:center;top:876.4px;font-size:10px;color:#f3f8ee">15</div>
<div class="t" style="left:1077px;width:160px;text-align:center;top:876.4px;font-size:10px;color:#f3f8ee">14,7</div>
<div class="t" style="left:245px;top:900.0px;font-size:10px;color:#f3f8ee">10.</div>
<div class="t" style="left:281px;top:900.0px;font-size:10px;color:#f3f8ee">17:00:00, 27 thg 8, 2022</div>
<div class="t" style="left:418px;top:900.0px;font-size:10px;color:#f3f8ee">Japan J1 League 2022</div>
<div class="t" style="left:521px;width:160px;text-align:center;top:900.0px;font-size:10px;color:#f3f8ee">Cerezo Osaka</div>
<div class="t" style="left:610px;width:160px;text-align:center;top:900.0px;font-size:10px;color:#f3f8ee">0 - 3</div>
<div class="t" style="left:696px;width:160px;text-align:center;top:900.0px;font-size:10px;color:#f3f8ee">Sanfrecce Hiroshima</div>
<div class="t" style="left:791px;width:160px;text-align:center;top:900.0px;font-size:10px;color:#f3f8ee">Win</div>
<div class="t" style="left:908px;width:160px;text-align:center;top:900.0px;font-size:10px;color:#f3f8ee">Sanfrecce Hiroshima +0 @1.8</div>
<div class="t" style="left:1020px;width:160px;text-align:center;top:900.0px;font-size:10px;color:#f3f8ee">15</div>
<div class="t" style="left:1077px;width:160px;text-align:center;top:900.0px;font-size:10px;color:#f3f8ee">12</div>
<div class="t" style="left:908px;width:160px;text-align:center;top:920px;font-size:10px;font-weight:bold;color:#fff">Tổng cộng</div>
<div class="t" style="left:1040px;width:120px;text-align:center;top:920px;font-size:10px;font-weight:bold;color:#fff">1.254</div>
<div class="t" style="left:1097px;width:120px;text-align:center;top:920px;font-size:10px;font-weight:bold;color:#fff">296,96</div>
<div class="t" style="left:1057px;top:943px;font-size:10px;color:#fff">1 - 100 / 139</div>
<svg style="left:1131px;top:940px" width="12" height="14"><path d="M8.5 1.5 L3 7 L8.5 12.5" stroke="#6b6e75" stroke-width="1.6" fill="none"/></svg>
<svg style="left:1160px;top:940px" width="12" height="14"><path d="M3.5 1.5 L9 7 L3.5 12.5" stroke="#fff" stroke-width="1.6" fill="none"/></svg>
<div class="t" style="left:249px;top:933px;font-size:14px;font-weight:bold;color:#d0d0d0;letter-spacing:0.8px">***</div>
<div class="t" style="left:274px;top:935px;font-size:16.7px;font-weight:bold;color:#fff">Note: Kiểm chứng lịch sử cược tại <span style="color:#4a90e2;text-decoration:underline">file Google Sheets</span></div>
</body></html>
